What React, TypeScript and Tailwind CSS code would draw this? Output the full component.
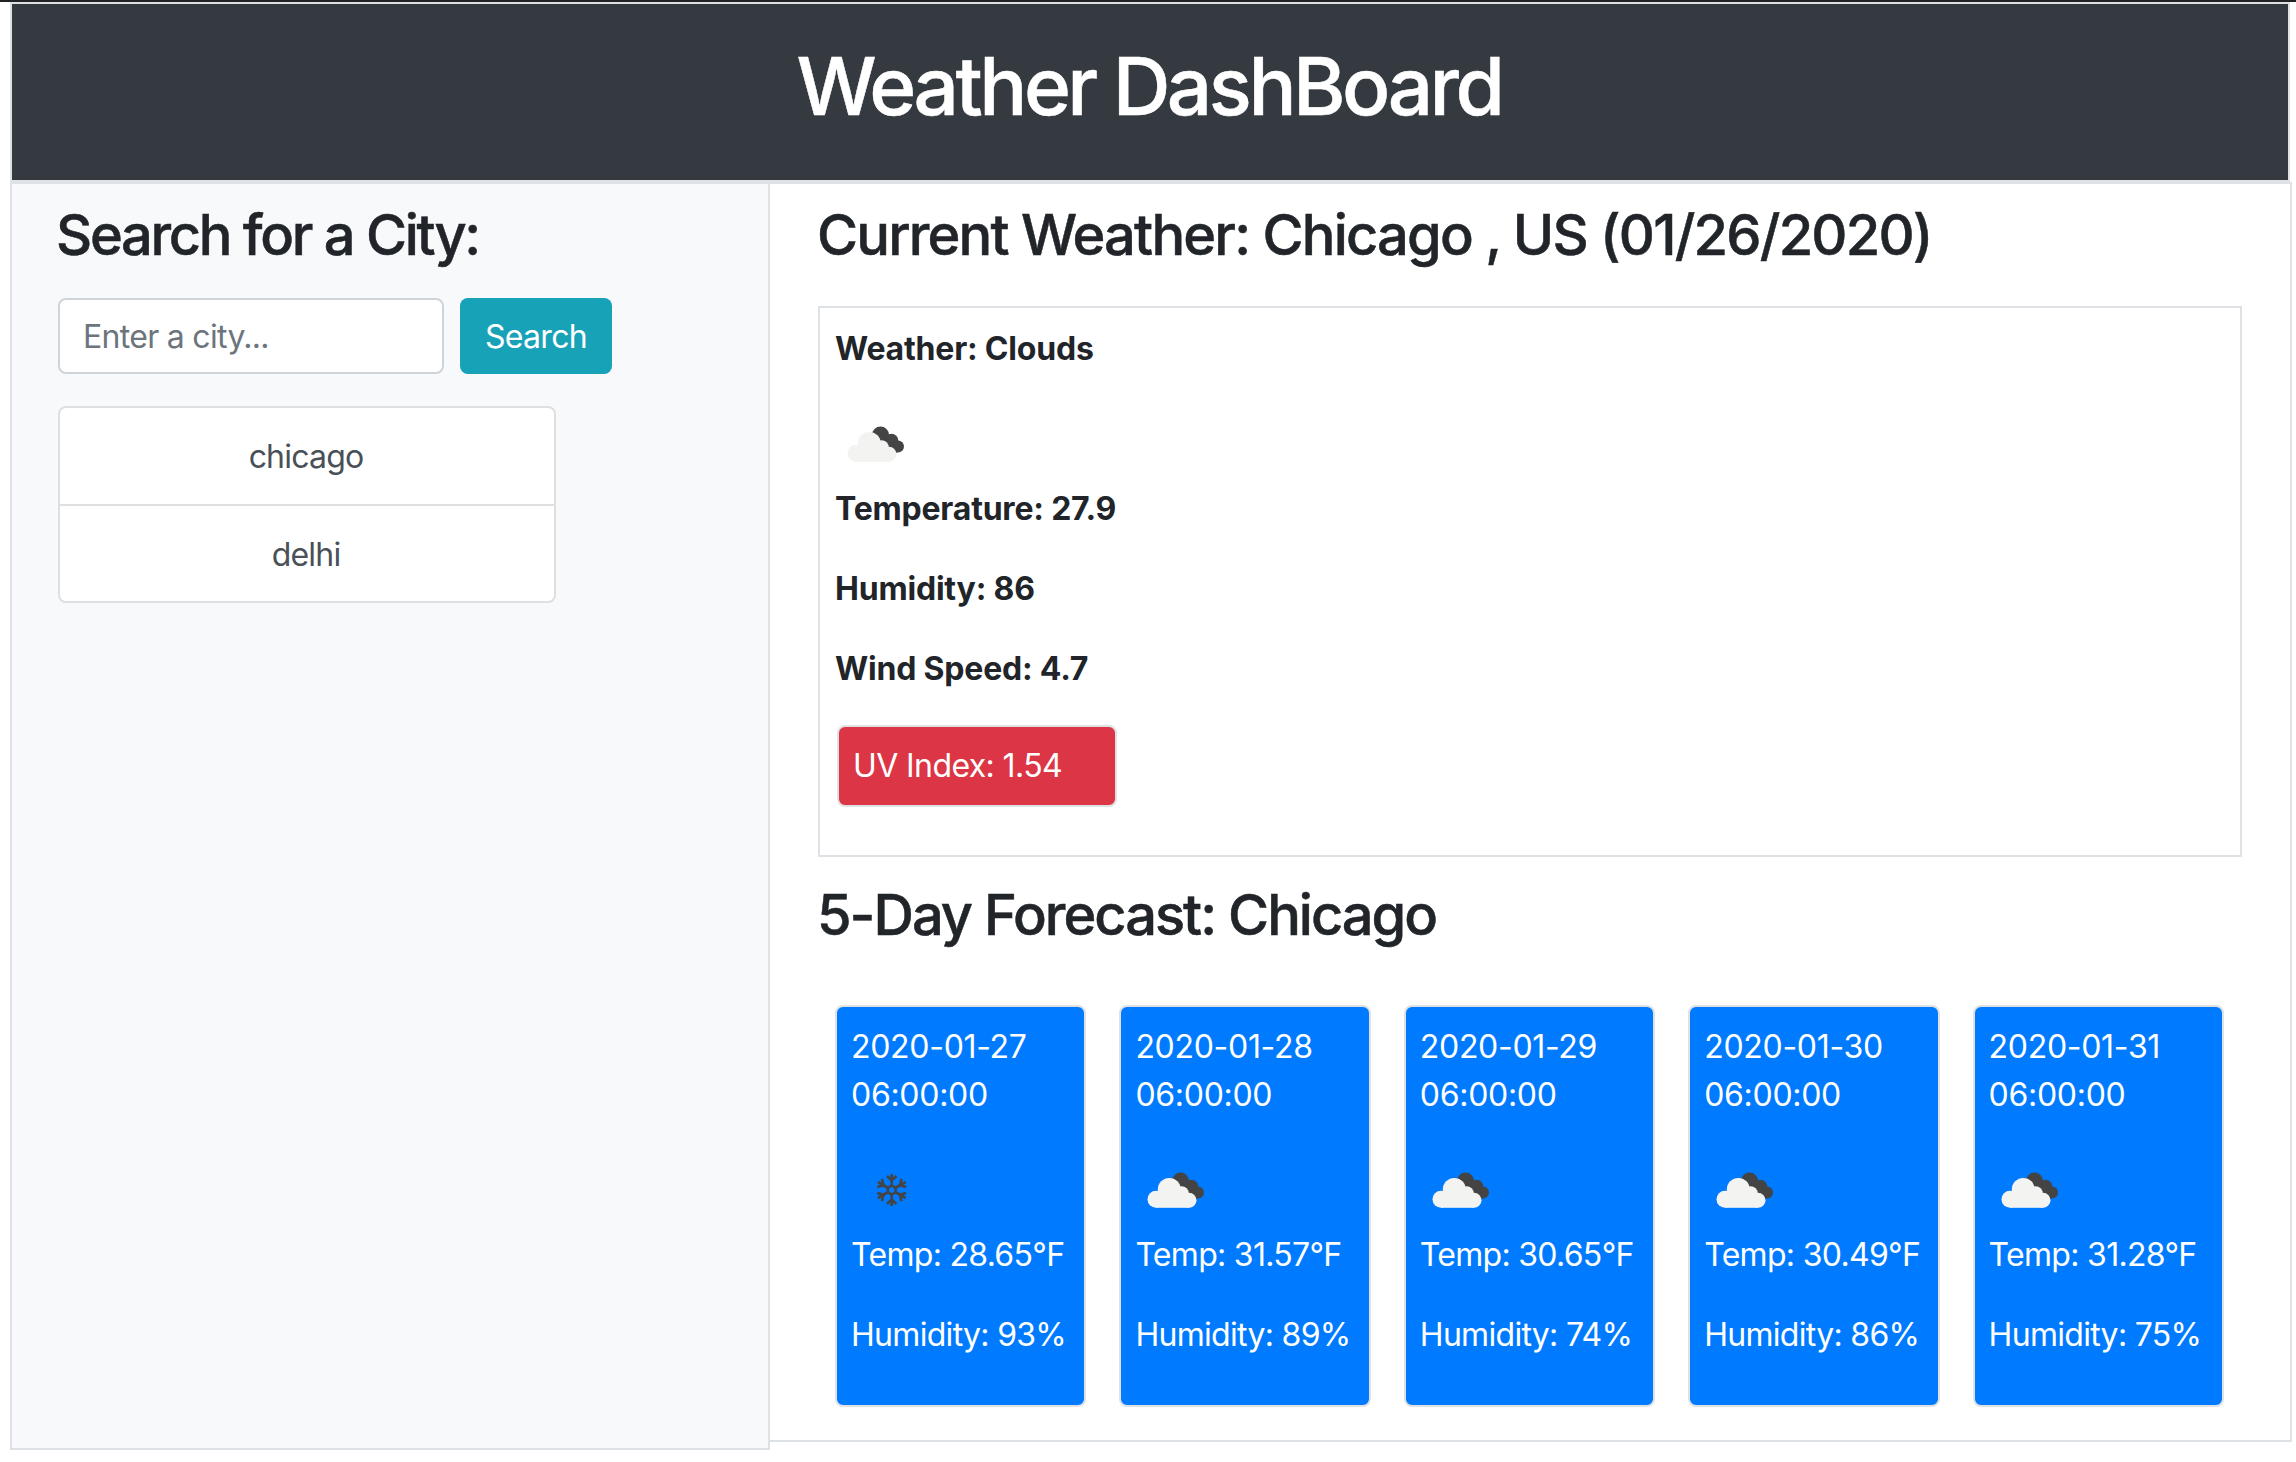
import React from 'react'

type Day = { date: string; icon: 'snow' | 'clouds'; temp: string; humidity: string }

const days: Day[] = [
    { date: '2020-01-27', icon: 'snow', temp: '28.65', humidity: '93' },
    { date: '2020-01-28', icon: 'clouds', temp: '31.57', humidity: '89' },
    { date: '2020-01-29', icon: 'clouds', temp: '30.65', humidity: '74' },
    { date: '2020-01-30', icon: 'clouds', temp: '30.49', humidity: '86' },
    { date: '2020-01-31', icon: 'clouds', temp: '31.28', humidity: '75' },
]

function CloudsIcon(): React.JSX.Element {
    return (
        <svg className="block w-20 h-20 ml-[1px]" viewBox="0 0 80 80">
            <g fill="#444444">
                <circle cx="44.5" cy="30" r="8.5" />
                <circle cx="55.5" cy="35.5" r="6.8" />
                <circle cx="62" cy="41.5" r="6" />
                <path d="M40 30 L56 30 L62 47 L50 52 Z" />
            </g>
            <g fill="#f3f3f2">
                <circle cx="33.3" cy="38.5" r="11.5" />
                <circle cx="20" cy="48.3" r="8.5" />
                <circle cx="45.7" cy="42.3" r="7" />
                <circle cx="53" cy="49.3" r="7.5" />
                <rect x="20" y="44" width="33" height="12.8" />
            </g>
        </svg>
    )
}

function SnowIcon(): React.JSX.Element {
    return (
        <svg className="block w-20 h-20 ml-[1px]" viewBox="0 0 80 80">
            <g stroke="#444444" strokeWidth="2.6" fill="none">
                {[0, 60, 120, 180, 240, 300].map((a) => (
                    <g key={a} transform={`rotate(${a} 39.7 39)`}>
                        <path d="M39.7 35 V23" />
                        <path d="M35 25 L39.7 29.5 L44.4 25" />
                    </g>
                ))}
                <circle cx="39.7" cy="39" r="4" />
            </g>
        </svg>
    )
}

function App(): React.JSX.Element {
    return (
        <div className="min-h-[1462px] bg-white font-['Inter','Liberation_Sans',sans-serif] text-[#212529]">
            <div className="h-[2px] bg-[#222222]"></div>

            <div className="ml-[10px] w-[2280px]">
                <header className="h-[180px] border-2 border-[#dee2e6] bg-[#343a40] flex items-center justify-center pb-[12px]">
                    <h1 className="text-[80px] leading-[96px] font-medium text-white tracking-[-3.5px] -ml-[2px] [-webkit-text-stroke:0.5px_currentColor]">Weather DashBoard</h1>
                </header>

                <div className="flex items-start">
                    <aside className="w-[760px] h-[1268px] shrink-0 border-2 border-[#dee2e6] bg-[#f8f9fa] px-[46px] pt-[18px]">
                        <h3 className="text-[56px] leading-[67px] font-medium tracking-[-2.3px] -ml-[2px] [-webkit-text-stroke:0.5px_currentColor]">Search for a City:</h3>

                        <div className="flex gap-[16px] mt-[29px]">
                            <input
                                placeholder="Enter a city..."
                                className="w-[386px] h-[76px] rounded-lg border-2 border-[#ced4da] bg-white px-[23px] pt-[1px] text-[32px] tracking-[-0.7px] text-[#495057] placeholder:text-[#6c757d] outline-none"
                            />
                            <button className="w-[152px] h-[76px] rounded-lg bg-[#17a2b8] pt-[2px] text-white text-[32px] tracking-[-0.7px]">Search</button>
                        </div>

                        <ul className="mt-[32px] w-[498px] rounded-lg border-2 border-[#dfdfe0] bg-white pr-[2px] text-[#495057] text-[32px] tracking-[-0.8px] text-center">
                            <li className="h-[96px] leading-[98px]">chicago</li>
                            <li className="h-[97px] leading-[98px] -mr-[2px] pr-[2px] border-t-2 border-[#dfdfe0]">delhi</li>
                        </ul>
                    </aside>

                    <main className="flex-1 h-[1260px] border-2 border-l-0 border-[#dee2e6] px-[48px] pt-[18px]">
                        <h3 className="text-[56px] leading-[67px] font-medium tracking-[-1.8px] -ml-[1px] [-webkit-text-stroke:0.5px_currentColor]">Current Weather: Chicago , US (01/26/2020)</h3>

                        <section className="mt-[37px] h-[551px] w-[1424px] border-2 border-[#dee2e6] pl-[15px] pt-[17px] text-[32px] leading-[48px] font-bold tracking-[-0.2px]">
                            <p className="mb-8">Weather: Clouds</p>
                            <CloudsIcon />
                            <p className="mb-8">Temperature: 27.9</p>
                            <p className="mb-8">Humidity: 86</p>
                            <p className="mb-8">Wind Speed: 4.7</p>
                            <button className="ml-[2px] w-[280px] h-[82px] rounded-lg bg-[#dc3545] border-2 border-[#dfe1e4] text-white font-normal text-left px-[14px] tracking-[-0.6px]">UV Index: 1.54</button>
                        </section>

                        <h3 className="mt-[25px] -ml-[1px] text-[56px] leading-[67px] font-medium tracking-[-2px] [-webkit-text-stroke:0.5px_currentColor]">5-Day Forecast: Chicago</h3>

                        <div className="grid grid-cols-5 gap-[33px] mt-[56px] ml-[17px] w-[1389px]">
                            {days.map((d) => (
                                <div key={d.date} className="h-[402px] rounded-lg border-2 border-[#dfe1e4] bg-[#007bff] py-4 pl-[14px] text-white text-[32px] leading-[48px]">
                                    <p className="mb-8 tracking-[-0.3px] w-[190px]">{d.date} 06:00:00</p>
                                    {d.icon === 'snow' ? <SnowIcon /> : <CloudsIcon />}
                                    <p className="mb-8 whitespace-nowrap tracking-[-0.7px]">Temp: {d.temp}°F</p>
                                    <p className="mb-8 whitespace-nowrap tracking-[-0.7px]">Humidity: {d.humidity}%</p>
                                </div>
                            ))}
                        </div>
                    </main>
                </div>
            </div>
        </div>
    )
}

export default App
